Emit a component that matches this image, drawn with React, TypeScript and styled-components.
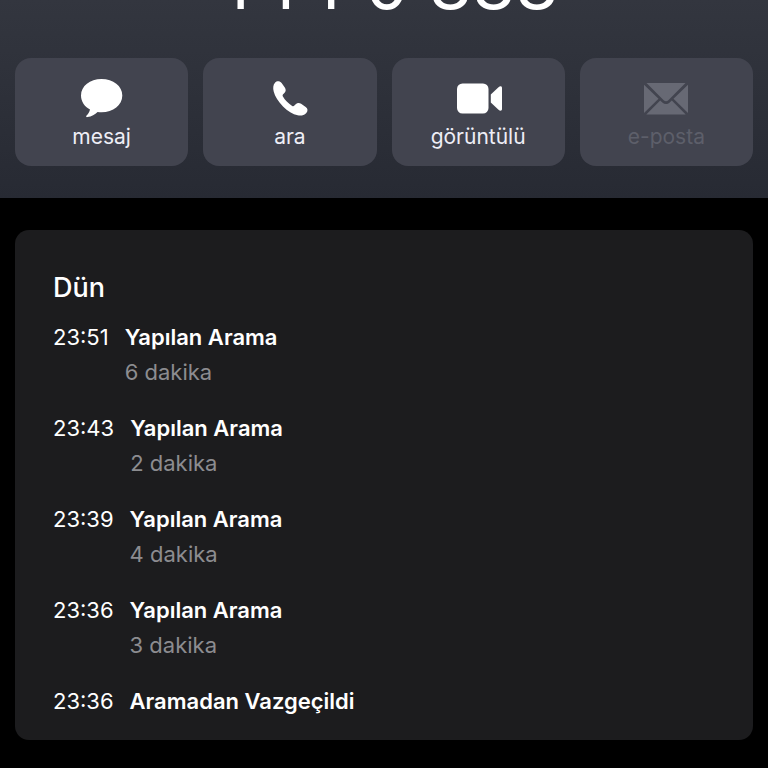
import React from "react";
import styled, { createGlobalStyle } from "styled-components";

const GlobalStyle = createGlobalStyle`
  *, *::before, *::after { box-sizing: border-box; }
  html { background: #000; }
  body {
    margin: 0;
    background: #000;
    color: #fff;
    font-family: Inter, "Liberation Sans", sans-serif;
    font-size: 22px;
    line-height: 28px;
  }
`;

const Header = styled.header`
  background: linear-gradient(#33363f, #272a33);
  padding: 0 15px 32px;
`;

const NumberWindow = styled.div`
  display: flex;
  align-items: flex-end;
  justify-content: center;
  height: 26px;
  overflow: hidden;
`;

const PhoneNumber = styled.h1`
  margin: 0;
  font-size: 70px;
  line-height: 84px;
  font-weight: 400;
  white-space: nowrap;
`;

const Actions = styled.nav`
  display: grid;
  grid-template-columns: repeat(4, 1fr);
  gap: 15px;
  margin-top: 32px;
`;

const ActionButton = styled.button`
  display: flex;
  flex-direction: column;
  align-items: center;
  gap: 3px;
  padding: 18px 8px 15px;
  border: 0;
  border-radius: 16px;
  background: #42444f;
  color: #fff;
  font: inherit;
  cursor: pointer;

  &:disabled {
    color: #676974;
    cursor: default;
  }
`;

const ActionLabel = styled.span`
  color: #eeeef6;
  font-size: 21px;

  ${ActionButton}:disabled & {
    color: #5d5f6a;
  }
`;

const Icon = styled.svg`
  display: block;
  width: 48px;
  height: 44px;
  fill: currentColor;
`;

const CallCard = styled.main`
  margin: 32px 15px 28px;
  padding: 41px 38px 25px;
  border-radius: 14px;
  background: #1c1c1e;
`;

const DayTitle = styled.h2`
  margin: 0 0 18px;
  font-size: 27px;
  line-height: 34px;
  font-weight: 500;
`;

const CallList = styled.ol`
  display: flex;
  flex-direction: column;
  gap: 28px;
  margin: 0;
  padding: 0;
  list-style: none;
`;

const CallRow = styled.li`
  display: flex;
  gap: 16px;
`;

const CallDetails = styled.div`
  display: flex;
  flex-direction: column;
  gap: 7px;
`;

const CallKind = styled.strong`
  font-weight: 600;
`;

const Duration = styled.span`
  color: #8c8c90;
`;

const MessageIcon = () => (
  <Icon viewBox="0 0 48 44" aria-hidden="true">
    <path d="M23.500 3C12 3 3 10 3 19.500C3 25.600 6.600 30.700 12 33.500C11.500 36 10.300 37.900 8.600 39.400C7.800 40.300 8.200 41.300 9.400 41.100C13.600 40.600 17 38.500 19.600 36C21 36.200 22.200 36.200 23.500 36.200C35.200 36.200 44.300 29.100 44.300 19.500C44.300 10 35.200 3 23.500 3Z" />
  </Icon>
);

const PhoneIcon = () => (
  <Icon viewBox="0 0 48 44" aria-hidden="true">
    <path d="M9 6.700C10.800 4.700 13.800 4.700 15.600 7L18.800 11.600C20.100 13.700 20 15.400 18.400 17L17.100 18.300C16.500 19 16.500 19.800 16.900 20.600C17.900 22.500 19.300 24.200 21 25.800C22.700 27.500 24.400 28.800 26.200 29.900C27 30.300 27.800 30.200 28.400 29.600L29.700 28.300C31.300 26.700 33.200 26.600 35.100 27.800L39.700 31C41.900 32.600 42.100 35 40.300 36.900C38 39.400 35 40 31.700 39.300C26.900 38.300 21.600 34.900 17 30.400C12.400 25.900 8.800 20.400 7.700 15.600C6.900 12.100 7 9 9 6.700Z" />
  </Icon>
);

const VideoIcon = () => (
  <Icon viewBox="0 0 48 44" aria-hidden="true">
    <rect x="3" y="7.500" width="31.500" height="30" rx="5.500" />
    <path d="M36.800 18.500L44.500 11.200C46.300 9.600 48 10.200 48 12V33C48 34.800 46.300 35.400 44.500 33.800L36.800 26.500Z" />
  </Icon>
);

const MailIcon = () => (
  <Icon viewBox="0 0 48 44" aria-hidden="true">
    <path d="M4.500 7H43.500L26.300 24.200C24.800 25.600 23.200 25.600 21.700 24.200Z" />
    <path d="M2 8.700L16.500 22.800L2 36.900Z" />
    <path d="M46 8.700V36.900L31.500 22.800Z" />
    <path d="M4.300 38.500L18.200 24.600L20.300 26.500C22.700 28.600 25.300 28.600 27.700 26.500L29.800 24.600L43.700 38.500Z" />
  </Icon>
);

const actions = [
  { label: "mesaj", Glyph: MessageIcon },
  { label: "ara", Glyph: PhoneIcon },
  { label: "görüntülü", Glyph: VideoIcon },
  { label: "e-posta", Glyph: MailIcon, disabled: true },
];

const calls = [
  { time: "23:51", kind: "Yapılan Arama", duration: "6 dakika" },
  { time: "23:43", kind: "Yapılan Arama", duration: "2 dakika" },
  { time: "23:39", kind: "Yapılan Arama", duration: "4 dakika" },
  { time: "23:36", kind: "Yapılan Arama", duration: "3 dakika" },
  { time: "23:36", kind: "Aramadan Vazgeçildi" },
];

export default function App() {
  return (
    <>
      <GlobalStyle />
      <Header>
        <NumberWindow>
          <PhoneNumber>444 0 888</PhoneNumber>
        </NumberWindow>
        <Actions>
          {actions.map(({ label, Glyph, disabled }) => (
            <ActionButton key={label} type="button" disabled={disabled}>
              <Glyph />
              <ActionLabel>{label}</ActionLabel>
            </ActionButton>
          ))}
        </Actions>
      </Header>
      <CallCard>
        <DayTitle>Dün</DayTitle>
        <CallList>
          {calls.map(({ time, kind, duration }, index) => (
            <CallRow key={index}>
              <time>{time}</time>
              <CallDetails>
                <CallKind>{kind}</CallKind>
                {duration && <Duration>{duration}</Duration>}
              </CallDetails>
            </CallRow>
          ))}
        </CallList>
      </CallCard>
    </>
  );
}
